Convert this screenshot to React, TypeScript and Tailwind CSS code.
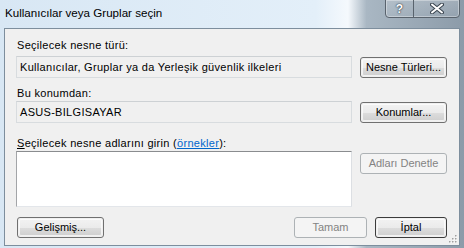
import React from "react";

/* Windows 7 "Select Users or Groups" dialog */

const ui = { fontFamily: '"Liberation Sans", Arial, sans-serif' };

function Btn({
  label,
  w,
  disabled,
  isDefault,
  className = "",
}: {
  label: string;
  w: string;
  disabled?: boolean;
  isDefault?: boolean;
  className?: string;
}) {
  if (disabled) {
    return (
      <div
        className={`${w} h-[21px] flex items-center justify-center rounded-[3px] border border-[#adb2b5] bg-[#f4f4f4] text-[11px] tracking-normal text-[#838383] ${className}`}
      >
        {label}
      </div>
    );
  }
  return (
    <div
      className={`${w} h-[21px] rounded-[3px] border ${
        isDefault ? "border-[#3c3c3c]" : "border-[#707070]"
      } p-px ${className}`}
    >
      <div className="h-full w-full rounded-[2px] flex items-center justify-center text-[11px] tracking-normal text-black bg-[linear-gradient(to_bottom,#f2f2f2_0%,#ebebeb_50%,#dddddd_51%,#cfcfcf_100%)] shadow-[inset_0_0_0_1px_rgba(255,255,255,0.7)]">
        {label}
      </div>
    </div>
  );
}

function Grip() {
  return (
    <svg width="8" height="8" viewBox="0 0 8 8" className="absolute right-[2px] bottom-[2px]">
      {[
        [6, 0],
        [3, 3],
        [6, 3],
        [0, 6],
        [3, 6],
        [6, 6],
      ].map(([x, y], i) => (
        <g key={i}>
          <rect x={x + 1} y={y + 1} width="1.5" height="1.5" fill="#ffffff" />
          <rect x={x} y={y} width="1.5" height="1.5" fill="#a0a0a0" />
        </g>
      ))}
    </svg>
  );
}

export default function App() {
  return (
    <div
      className="relative w-[464px] h-[248px] overflow-hidden flex flex-col pt-[28px] pl-[4px] pr-[4px] pb-[2px] bg-[linear-gradient(to_right,#d8e7f4_0%,#e3eff9_68%,#f5f9fd_75%,#a9b7c3_79%,#8c9ba9_100%)]"
      style={ui}
    >
      {/* title */}
      <div className="absolute left-[5px] top-[5px] text-[11.6px] leading-[16px] text-black">
        Kullanıcılar veya Gruplar seçin
      </div>

      {/* caption buttons */}
      <div className="absolute left-[385px] top-[-1px] w-[75px] h-[19px] flex rounded-b-[4px] border border-[#59636d] shadow-[inset_0_0_0_1px_rgba(255,255,255,0.35)] bg-[linear-gradient(to_bottom,rgba(255,255,255,0.18),rgba(255,255,255,0.05))]">
        <div className="w-[28px] h-full flex items-center justify-center border-r border-[#59636d]">
          <span className="text-[12px] leading-none font-bold text-white [text-shadow:0_0_2px_#2b3640,0_0_1px_#2b3640]">
            ?
          </span>
        </div>
        <div className="flex-1 h-full flex items-center justify-center">
          <svg width="14" height="11" viewBox="0 0 14 11">
            <path
              d="M2 1.5 L12 9.5 M12 1.5 L2 9.5"
              stroke="#3a4550"
              strokeWidth="4"
              strokeLinecap="round"
            />
            <path
              d="M2 1.5 L12 9.5 M12 1.5 L2 9.5"
              stroke="#ffffff"
              strokeWidth="2"
              strokeLinecap="round"
            />
          </svg>
        </div>
      </div>

      {/* client area */}
      <div className="relative flex-1 flex flex-col border border-[#7d8e9d] bg-[#f0f0f0] pl-[11px] pr-[12px] text-[11px] tracking-[0.3px] text-black">
        <div className="mt-[10px] pl-px leading-[13px]">Seçilecek nesne türü:</div>
        <div className="mt-[4px] flex items-start gap-[8px]">
          <div className="w-[336px] h-[22px] flex items-center pl-[3px] border border-[#d8dcdf] border-t-[#cdd1d4] bg-[#f0f0f0]">
            Kullanıcılar, Gruplar ya da Yerleşik güvenlik ilkeleri
          </div>
          <Btn label="Nesne Türleri..." w="w-[87px]" className="mt-px" />
        </div>

        <div className="mt-[9px] pl-px leading-[13px]">Bu konumdan:</div>
        <div className="mt-[1px] flex items-start gap-[8px]">
          <div className="w-[336px] h-[22px] flex items-center pl-[3px] border border-[#d8dcdf] border-t-[#cdd1d4] bg-[#f0f0f0]">
            ASUS-BILGISAYAR
          </div>
          <Btn label="Konumlar..." w="w-[87px]" className="mt-px" />
        </div>

        <div className="mt-[14px] pl-px leading-[13px]">
          <span className="underline">S</span>eçilecek nesne adlarını girin (
          <span className="text-[#0066cc] underline">örnekler</span>):
        </div>
        <div className="mt-[1px] flex items-start gap-[8px]">
          <div className="w-[336px] h-[56px] bg-white border border-t-[#8a8c8f] border-l-[#a3a5a8] border-r-[#dcdfe3] border-b-[#e3e6ea]" />
          <Btn label="Adları Denetle" w="w-[87px]" disabled className="mt-[2px]" />
        </div>

        <div className="mt-[10px] flex items-start">
          <Btn label="Gelişmiş..." w="w-[87px]" className="ml-px" />
          <div className="flex-1" />
          <Btn label="Tamam" w="w-[73px]" disabled />
          <Btn label="İptal" w="w-[72px]" isDefault className="ml-[8px]" />
        </div>
        <Grip />
      </div>
    </div>
  );
}
